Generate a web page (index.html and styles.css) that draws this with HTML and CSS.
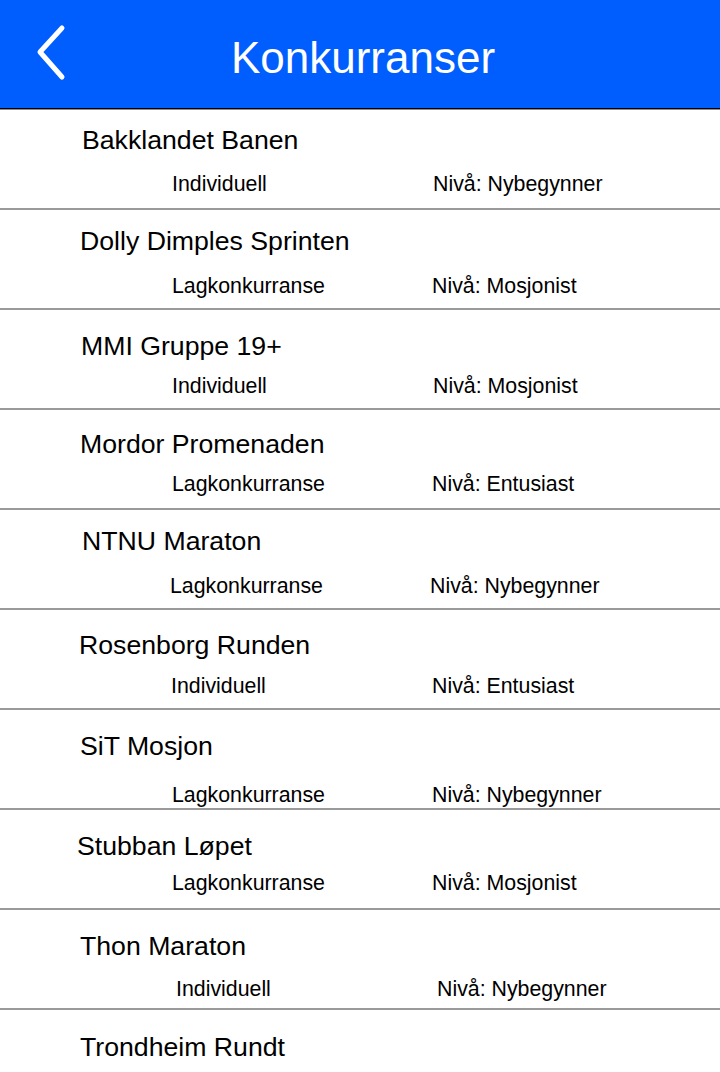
FILE: index.html
```html
<!DOCTYPE html>
<html lang="no">
<head>
<meta charset="utf-8">
<title>Konkurranser</title>
<link rel="stylesheet" href="styles.css">
</head>
<body>
<header class="topbar">
  <button class="back" aria-label="Tilbake">
    <svg width="40" height="62" viewBox="0 0 40 62"><path d="M27 4 L5 28 L27 53" fill="none" stroke="#fff" stroke-width="5" stroke-linecap="round" stroke-linejoin="round"/></svg>
  </button>
  <h1 class="title">Konkurranser</h1>
</header>
<ul class="list">
  <li class="item r1"><div class="name">Bakklandet Banen</div><div class="meta"><span class="type">Individuell</span><span class="level">Nivå: Nybegynner</span></div></li>
  <li class="item r2"><div class="name">Dolly Dimples Sprinten</div><div class="meta"><span class="type">Lagkonkurranse</span><span class="level">Nivå: Mosjonist</span></div></li>
  <li class="item r3"><div class="name">MMI Gruppe 19+</div><div class="meta"><span class="type">Individuell</span><span class="level">Nivå: Mosjonist</span></div></li>
  <li class="item r4"><div class="name">Mordor Promenaden</div><div class="meta"><span class="type">Lagkonkurranse</span><span class="level">Nivå: Entusiast</span></div></li>
  <li class="item r5"><div class="name">NTNU Maraton</div><div class="meta"><span class="type">Lagkonkurranse</span><span class="level">Nivå: Nybegynner</span></div></li>
  <li class="item r6"><div class="name">Rosenborg Runden</div><div class="meta"><span class="type">Individuell</span><span class="level">Nivå: Entusiast</span></div></li>
  <li class="item r7"><div class="name">SiT Mosjon</div><div class="meta"><span class="type">Lagkonkurranse</span><span class="level">Nivå: Nybegynner</span></div></li>
  <li class="item r8"><div class="name">Stubban Løpet</div><div class="meta"><span class="type">Lagkonkurranse</span><span class="level">Nivå: Mosjonist</span></div></li>
  <li class="item r9"><div class="name">Thon Maraton</div><div class="meta"><span class="type">Individuell</span><span class="level">Nivå: Nybegynner</span></div></li>
  <li class="item r10"><div class="name">Trondheim Rundt</div><div class="meta"><span class="type">Individuell</span><span class="level">Nivå: Mosjonist</span></div></li>
</ul>
</body>
</html>
```
FILE: styles.css
```css
* { box-sizing: border-box; }
html, body {
  margin: 0;
  padding: 0;
  background: #fff;
  font-family: "Liberation Sans", Arial, sans-serif;
  color: #000;
}
.topbar {
  position: relative;
  height: 110px;
  background: #005eff;
  border-bottom: 1px solid #8a8a8a;
  box-shadow: inset 0 -1px 0 #000;
  display: flex;
  justify-content: center;
}
.back {
  position: absolute;
  left: 35px;
  top: 24px;
  padding: 0;
  margin: 0;
  border: 0;
  background: none;
  width: 40px;
  height: 62px;
}
.back svg { display: block; }
.title {
  margin: 0;
  padding: 32px 0 0 6px;
  font-weight: 400;
  font-size: 44px;
  line-height: 52px;
  color: #fff;
}
.list {
  list-style: none;
  margin: 0;
  padding: 0;
}
.item {
  --t: 14px; --g: 16px; --x: 81px; --s1: 171px; --s2: 432px;
  height: 100px;
  border-bottom: 2px solid #9a9a9a;
  padding-top: var(--t);
}
.name {
  padding-left: var(--x);
  font-size: 26.67px;
  line-height: 32px;
  white-space: nowrap;
}
.meta {
  display: flex;
  margin-top: var(--g);
  padding-left: var(--s1);
  font-size: 21.33px;
  line-height: 26px;
  white-space: nowrap;
}
.type { width: calc(var(--s2) - var(--s1)); }
.r1 { --t: 14px; --g: 15px; --x: 82px; --s1: 172px; --s2: 433px; }
.r2 { --t: 15px; --g: 16px; --x: 80px; --s1: 172px; --s2: 432px; }
.r3 { --t: 20px; --g: 11px; --x: 81px; --s1: 172px; --s2: 433px; }
.r4 { --t: 18px; --g: 11px; --x: 80px; --s1: 172px; --s2: 432px; }
.r5 { --t: 15px; --g: 16px; --x: 82px; --s1: 170px; --s2: 430px; }
.r6 { --t: 19px; --g: 12px; --x: 79px; --s1: 171px; --s2: 432px; }
.r7 { --t: 20px; --g: 20px; --x: 80px; --s1: 172px; --s2: 432px; }
.r8 { --t: 20px; --g: 8px;  --x: 77px; --s1: 172px; --s2: 432px; }
.r9 { --t: 20px; --g: 14px; --x: 80px; --s1: 176px; --s2: 437px; }
.r10 { --t: 21px; --g: 20px; --x: 80px; --s1: 172px; --s2: 433px; }
```
